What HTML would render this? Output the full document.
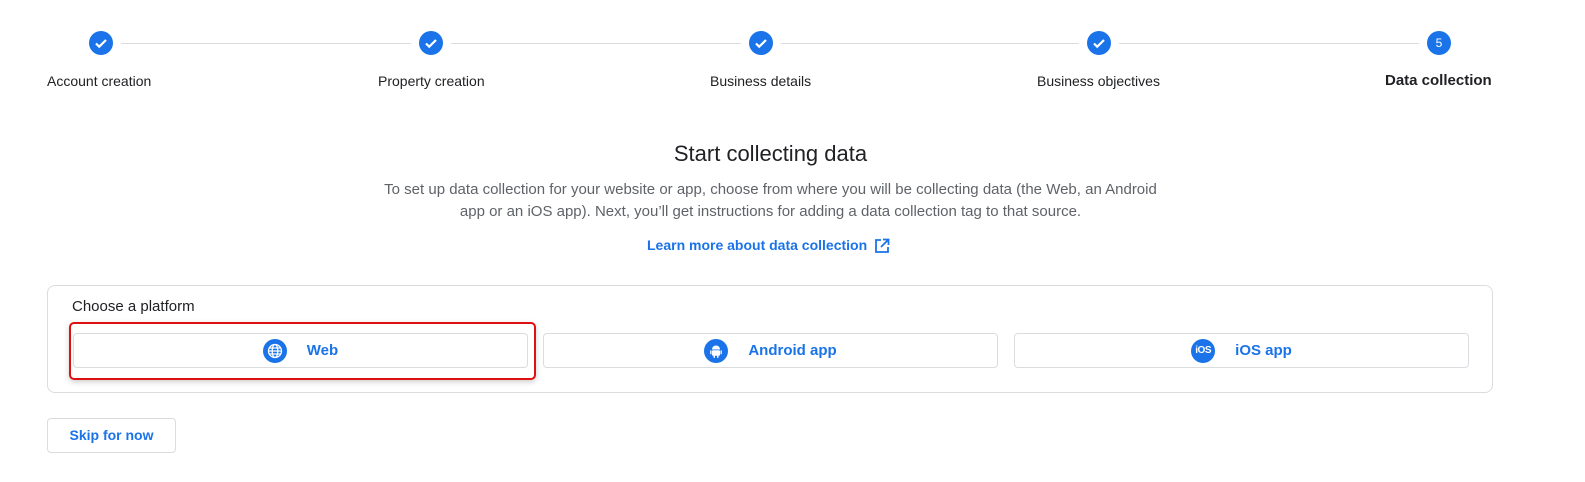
<!DOCTYPE html><html><head><style>
body{margin:0;width:1585px;height:482px;background:#fff;font-family:"Liberation Sans",sans-serif;position:relative;overflow:hidden}
.a{position:absolute}
.c{position:absolute;width:24px;height:24px;border-radius:50%;background:#1a73e8;top:31px;color:#fff;font-size:12px;text-align:center;line-height:24px}
.l{position:absolute;top:43px;height:1px;background:#dadce0}
.lb{position:absolute;top:73px;font-size:14px;color:#202124}
.btn{position:absolute;top:333px;height:35px;border:1px solid #dadce0;border-radius:4px;background:#fff;color:#1a73e8;font-size:15px;font-weight:bold;display:flex;align-items:center;justify-content:center;box-sizing:border-box}
.ic{width:24px;height:24px;border-radius:50%;background:#1a73e8;margin-right:20px;display:flex;align-items:center;justify-content:center}
</style></head><body>
<div class="l" style="left:121px;width:290px"></div>
<div class="l" style="left:451px;width:290px"></div>
<div class="l" style="left:781px;width:298px"></div>
<div class="l" style="left:1119px;width:300px"></div>
<svg width="0" height="0" style="position:absolute"><defs><symbol id="ck" viewBox="0 0 24 24"><path d="M7 12.5l3.2 3.2L17 9" stroke="#fff" stroke-width="2.2" fill="none"/></symbol></defs></svg>
<div class="c" style="left:89px"><svg width="24" height="24"><use href="#ck"/></svg></div>
<div class="c" style="left:419px"><svg width="24" height="24"><use href="#ck"/></svg></div>
<div class="c" style="left:749px"><svg width="24" height="24"><use href="#ck"/></svg></div>
<div class="c" style="left:1087px"><svg width="24" height="24"><use href="#ck"/></svg></div>
<div class="c" style="left:1427px">5</div>
<div class="lb" style="left:47px">Account creation</div>
<div class="lb" style="left:378px">Property creation</div>
<div class="lb" style="left:710px">Business details</div>
<div class="lb" style="left:1037px">Business objectives</div>
<div class="lb" style="left:1385px;font-weight:bold;font-size:15px;top:72px">Data collection</div>
<div class="a" style="left:0;width:1541px;text-align:center;top:141px;font-size:22px;color:#202124">Start collecting data</div>
<div class="a" style="left:0;width:1541px;text-align:center;top:179px;font-size:15px;color:#5f6368;line-height:22px">To set up data collection for your website or app, choose from where you will be collecting data (the Web, an Android<br>app or an iOS app). Next, you’ll get instructions for adding a data collection tag to that source.</div>
<div class="a" style="left:647px;top:237px;font-size:14px;color:#1a73e8;font-weight:bold">Learn more about data collection</div>
<svg class="a" style="left:874px;top:238px" width="16" height="16" viewBox="0 0 16 16"><path d="M7 2H2v12h12V9M9 1.5h5.5V7M14.5 1.5L7 9" stroke="#1a73e8" stroke-width="1.8" fill="none"/></svg>
<div class="a" style="left:47px;top:285px;width:1446px;height:108px;border:1px solid #dadce0;border-radius:8px;box-sizing:border-box"></div>
<div class="a" style="left:72px;top:298px;font-size:15px;color:#202124">Choose a platform</div>
<div class="a" style="left:69px;top:322px;width:467px;height:58px;border:2px solid #e01010;border-radius:5px;box-sizing:border-box;box-shadow:0 2px 6px rgba(0,0,0,.2)"></div>
<div class="btn" style="left:73px;width:455px"><div class="ic"><svg width="16" height="16" viewBox="0 0 16 16" fill="none" stroke="#fff" stroke-width="1.3"><circle cx="8" cy="8" r="6.5"/><ellipse cx="8" cy="8" rx="2.8" ry="6.5"/><path d="M1.5 8h13M2.5 5h11M2.5 11h11"/></svg></div>Web</div>
<div class="btn" style="left:543px;width:455px"><div class="ic"><svg width="16" height="16" viewBox="0 0 16 16" fill="#fff"><path d="M4 6.5a4 4 0 0 1 8 0z"/><rect x="4" y="7.3" width="8" height="5.5" rx="1"/><rect x="2.2" y="7.3" width="1.3" height="4" rx=".6"/><rect x="12.5" y="7.3" width="1.3" height="4" rx=".6"/><rect x="5.5" y="12" width="1.5" height="3" rx=".7"/><rect x="9" y="12" width="1.5" height="3" rx=".7"/></svg></div>Android app</div>
<div class="btn" style="left:1014px;width:455px"><div class="ic"><span style="color:#fff;font-size:10px;font-weight:bold;letter-spacing:-.5px">iOS</span></div>iOS app</div>
<div class="a" style="left:47px;top:418px;width:129px;height:35px;border:1px solid #dadce0;border-radius:4px;box-sizing:border-box;color:#1a73e8;font-size:14px;font-weight:bold;text-align:center;line-height:33px">Skip for now</div>
</body></html>
